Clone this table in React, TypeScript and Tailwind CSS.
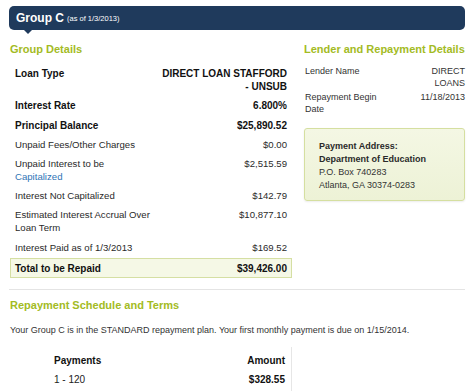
import React from "react";

function Row({
  label,
  value,
  bold,
  className = "",
}: {
  label: React.ReactNode;
  value: React.ReactNode;
  bold?: boolean;
  className?: string;
}) {
  return (
    <div
      className={`flex justify-between px-[5px] leading-[13px] ${
        bold ? "font-bold text-[10px] text-[#111]" : "text-[9.6px] text-[#2a2a2a]"
      } ${className}`}
    >
      <div>{label}</div>
      <div className="text-right">{value}</div>
    </div>
  );
}

export default function App() {
  return (
    <div className="w-[474px] h-[391px] overflow-hidden bg-white font-['Liberation_Sans',Arial,sans-serif]">
      {/* Header bar */}
      <div className="relative mx-[9px] mt-[6px] h-[24px] rounded-[5px] bg-[#1f3a5c] flex items-center pl-[7px]">
        <span className="text-white font-bold text-[12px] leading-[14px]">Group C</span>
        <span className="text-white text-[7.5px] leading-[10px] ml-[3px] mt-[2px]">(as of 1/3/2013)</span>
        <div className="absolute left-[15px] top-full w-0 h-0 border-l-[4px] border-r-[4px] border-t-[4px] border-l-transparent border-r-transparent border-t-[#1f3a5c]" />
      </div>

      <div className="flex mt-[12px]">
        {/* Left column */}
        <div className="ml-[10px] w-[282px]">
          <h2 className="text-[11px] leading-[14px] font-bold text-[#a3bb24]">Group Details</h2>
          <div className="mt-[8px]">
            <Row
              bold
              className="py-[3px]"
              label="Loan Type"
              value={
                <>
                  DIRECT LOAN STAFFORD
                  <br />- UNSUB
                </>
              }
            />
            <Row bold className="pt-[3px] pb-[4px]" label="Interest Rate" value="6.800%" />
            <Row bold className="py-[3px]" label="Principal Balance" value="$25,890.52" />
            <Row className="py-[3px]" label="Unpaid Fees/Other Charges" value="$0.00" />
            <Row
              className="py-[3px]"
              label={
                <>
                  Unpaid Interest to be
                  <br />
                  <span className="text-[#2f74b5]">Capitalized</span>
                </>
              }
              value="$2,515.59"
            />
            <Row className="py-[3px]" label="Interest Not Capitalized" value="$142.79" />
            <Row
              className="pt-[3px] pb-[4px]"
              label={
                <>
                  Estimated Interest Accrual Over
                  <br />
                  Loan Term
                </>
              }
              value="$10,877.10"
            />
            <Row className="py-[3px]" label="Interest Paid as of 1/3/2013" value="$169.52" />
            <div className="mt-[1px] flex justify-between items-center h-[20px] border border-[#d5dfa3] bg-[#f5f8e6] px-[4px] text-[10px] font-bold text-[#111] leading-[13px]">
              <span>Total to be Repaid</span>
              <span>$39,426.00</span>
            </div>
          </div>
        </div>

        {/* Right column */}
        <div className="ml-[12px] w-[161px]">
          <h2 className="text-[11px] leading-[14px] font-bold text-[#a3bb24]">Lender and Repayment Details</h2>
          <div className="mt-[9px] text-[9px] leading-[12px] text-[#333]">
            <div className="flex justify-between pl-[1px]">
              <span>Lender Name</span>
              <span className="text-right">
                DIRECT
                <br />
                LOANS
              </span>
            </div>
            <div className="flex justify-between pl-[1px] mt-[2px]">
              <span>
                Repayment Begin
                <br />
                Date
              </span>
              <span className="text-right">11/18/2013</span>
            </div>
          </div>
          <div className="mt-[13px] h-[73px] rounded-[3px] border border-[#d5dfa0] bg-gradient-to-b from-[#f4f7e4] to-[#edf2d6] shadow-[0_1px_2px_rgba(0,0,0,0.08)] pl-[14px] pt-[11px] text-[9px] leading-[13px] text-[#333]">
            <div className="font-bold text-[#2a2a2a]">Payment Address:</div>
            <div className="font-bold text-[#2a2a2a]">Department of Education</div>
            <div>P.O. Box 740283</div>
            <div>Atlanta, GA 30374-0283</div>
          </div>
        </div>
      </div>

      {/* Divider */}
      <div className="mx-[9px] mt-[11px] border-t border-[#e4e4e4]" />

      <h2 className="ml-[10px] mt-[8px] text-[11px] leading-[14px] font-bold text-[#a3bb24]">
        Repayment Schedule and Terms
      </h2>
      <p className="ml-[10px] mt-[12px] text-[9px] leading-[12px] text-[#333]">
        Your Group C is in the STANDARD repayment plan. Your first monthly payment is due on 1/15/2014.
      </p>

      <div className="ml-[48px] mt-[11px] w-[244px] border-r border-[#e6e6e6] pl-[6px] pr-[6px] pt-[7px] pb-[10px]">
        <div className="flex justify-between text-[10px] leading-[13px] font-bold text-[#111]">
          <span>Payments</span>
          <span>Amount</span>
        </div>
        <div className="flex justify-between mt-[5.5px] text-[10px] leading-[13px] text-[#222]">
          <span>1 - 120</span>
          <span className="font-bold text-[#111]">$328.55</span>
        </div>
      </div>
    </div>
  );
}
